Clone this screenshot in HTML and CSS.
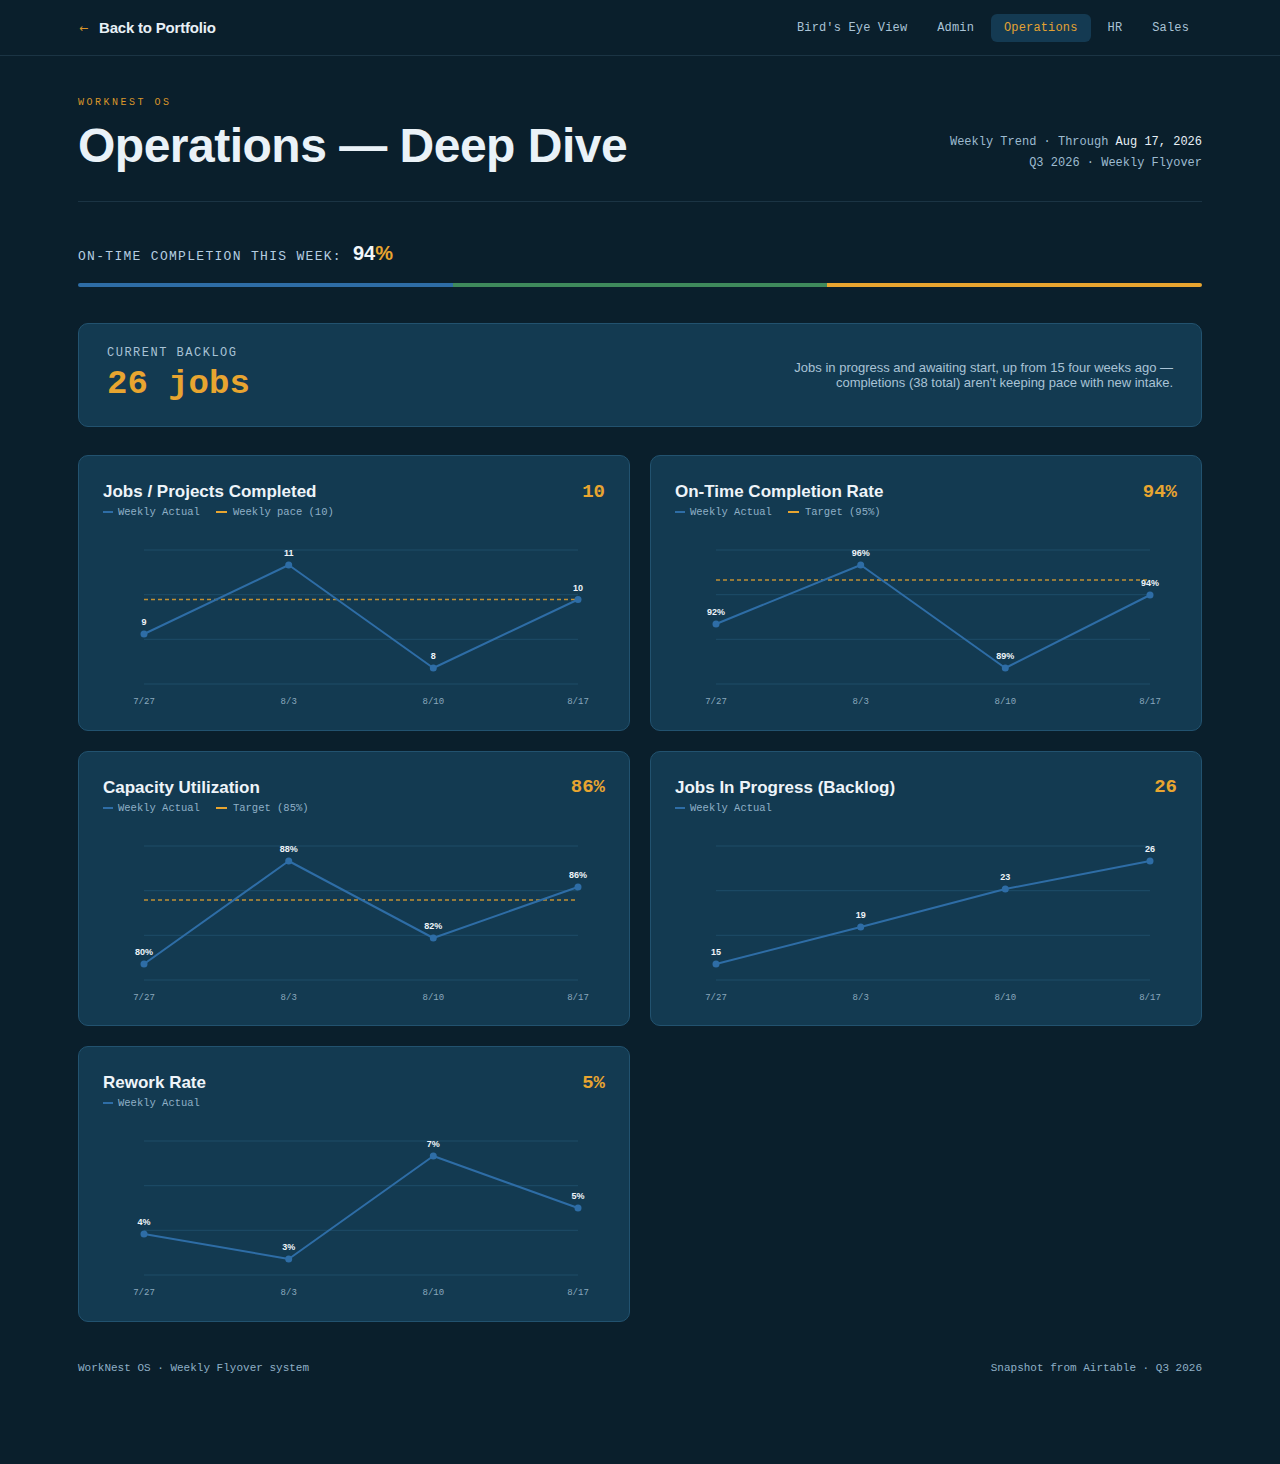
FILE: index.html
```html
<!DOCTYPE html>
<html lang="en">
<head>
<meta charset="utf-8">
<title>Operations — Deep Dive</title>
<link rel="stylesheet" href="styles.css">
</head>
<body>
<header class="topbar">
  <div class="wrap topbar-inner">
    <a class="back" href="#"><span class="back-arrow">←</span>Back to Portfolio</a>
    <nav class="nav">
      <a href="#" class="nav-item">Bird's Eye View</a>
      <a href="#" class="nav-item">Admin</a>
      <a href="#" class="nav-item active">Operations</a>
      <a href="#" class="nav-item">HR</a>
      <a href="#" class="nav-item">Sales</a>
    </nav>
  </div>
</header>

<main class="wrap">
  <section class="hero">
    <div class="hero-left">
      <div class="eyebrow">WORKNEST OS</div>
      <h1 class="title">Operations — Deep Dive</h1>
    </div>
    <div class="hero-meta">
      <div>Weekly Trend · Through <span class="bright">Aug 17, 2026</span></div>
      <div>Q3 2026 · Weekly Flyover</div>
    </div>
  </section>

  <section class="headline">
    <span class="headline-label">ON-TIME COMPLETION THIS WEEK:</span>
    <span class="headline-value">94<span class="pct">%</span></span>
  </section>
  <div class="tribar">
    <span class="seg seg-blue"></span><span class="seg seg-green"></span><span class="seg seg-orange"></span>
  </div>

  <section class="backlog">
    <div class="backlog-left">
      <div class="backlog-label">CURRENT BACKLOG</div>
      <div class="backlog-value">26 jobs</div>
    </div>
    <p class="backlog-desc">Jobs in progress and awaiting start, up from 15 four weeks ago —<br>completions (38 total) aren't keeping pace with new intake.</p>
  </section>

  <section class="charts">
    <!-- Chart 1 -->
    <article class="card">
      <div class="card-head">
        <h2 class="card-title">Jobs / Projects Completed</h2>
        <span class="card-value">10</span>
      </div>
      <div class="legend">
        <span class="lg"><i class="lg-dash blue"></i>Weekly Actual</span>
        <span class="lg"><i class="lg-dash orange"></i>Weekly pace (10)</span>
      </div>
      <svg class="chart" width="502" height="185" viewBox="0 0 502 185">
        <g class="grid"><line x1="41" x2="475" y1="30" y2="30"/><line x1="41" x2="475" y1="74.7" y2="74.7"/><line x1="41" x2="475" y1="119.3" y2="119.3"/><line x1="41" x2="475" y1="164" y2="164"/></g>
        <line class="target" x1="41" x2="475" y1="79.5" y2="79.5"/>
        <polyline class="series" points="41,114 185.7,45 330.3,148 475,79.5"/>
        <g class="pts"><circle cx="41" cy="114" r="3.5"/><circle cx="185.7" cy="45" r="3.5"/><circle cx="330.3" cy="148" r="3.5"/><circle cx="475" cy="79.5" r="3.5"/></g>
        <g class="dl"><text x="41" y="105">9</text><text x="185.7" y="36">11</text><text x="330.3" y="139">8</text><text x="475" y="71">10</text></g>
        <g class="ax"><text x="41" y="184">7/27</text><text x="185.7" y="184">8/3</text><text x="330.3" y="184">8/10</text><text x="475" y="184">8/17</text></g>
      </svg>
    </article>

    <!-- Chart 2 -->
    <article class="card">
      <div class="card-head">
        <h2 class="card-title">On-Time Completion Rate</h2>
        <span class="card-value">94%</span>
      </div>
      <div class="legend">
        <span class="lg"><i class="lg-dash blue"></i>Weekly Actual</span>
        <span class="lg"><i class="lg-dash orange"></i>Target (95%)</span>
      </div>
      <svg class="chart" width="502" height="185" viewBox="0 0 502 185">
        <g class="grid"><line x1="41" x2="475" y1="30" y2="30"/><line x1="41" x2="475" y1="74.7" y2="74.7"/><line x1="41" x2="475" y1="119.3" y2="119.3"/><line x1="41" x2="475" y1="164" y2="164"/></g>
        <line class="target" x1="41" x2="475" y1="60" y2="60"/>
        <polyline class="series" points="41,104 185.7,45 330.3,148 475,75"/>
        <g class="pts"><circle cx="41" cy="104" r="3.5"/><circle cx="185.7" cy="45" r="3.5"/><circle cx="330.3" cy="148" r="3.5"/><circle cx="475" cy="75" r="3.5"/></g>
        <g class="dl"><text x="41" y="95">92%</text><text x="185.7" y="36">96%</text><text x="330.3" y="139">89%</text><text x="475" y="66">94%</text></g>
        <g class="ax"><text x="41" y="184">7/27</text><text x="185.7" y="184">8/3</text><text x="330.3" y="184">8/10</text><text x="475" y="184">8/17</text></g>
      </svg>
    </article>

    <!-- Chart 3 -->
    <article class="card">
      <div class="card-head">
        <h2 class="card-title">Capacity Utilization</h2>
        <span class="card-value">86%</span>
      </div>
      <div class="legend">
        <span class="lg"><i class="lg-dash blue"></i>Weekly Actual</span>
        <span class="lg"><i class="lg-dash orange"></i>Target (85%)</span>
      </div>
      <svg class="chart" width="502" height="185" viewBox="0 0 502 185">
        <g class="grid"><line x1="41" x2="475" y1="30" y2="30"/><line x1="41" x2="475" y1="74.7" y2="74.7"/><line x1="41" x2="475" y1="119.3" y2="119.3"/><line x1="41" x2="475" y1="164" y2="164"/></g>
        <line class="target" x1="41" x2="475" y1="84" y2="84"/>
        <polyline class="series" points="41,148 185.7,45 330.3,122 475,71"/>
        <g class="pts"><circle cx="41" cy="148" r="3.5"/><circle cx="185.7" cy="45" r="3.5"/><circle cx="330.3" cy="122" r="3.5"/><circle cx="475" cy="71" r="3.5"/></g>
        <g class="dl"><text x="41" y="139">80%</text><text x="185.7" y="36">88%</text><text x="330.3" y="113">82%</text><text x="475" y="62">86%</text></g>
        <g class="ax"><text x="41" y="184">7/27</text><text x="185.7" y="184">8/3</text><text x="330.3" y="184">8/10</text><text x="475" y="184">8/17</text></g>
      </svg>
    </article>

    <!-- Chart 4 -->
    <article class="card">
      <div class="card-head">
        <h2 class="card-title">Jobs In Progress (Backlog)</h2>
        <span class="card-value">26</span>
      </div>
      <div class="legend">
        <span class="lg"><i class="lg-dash blue"></i>Weekly Actual</span>
      </div>
      <svg class="chart" width="502" height="185" viewBox="0 0 502 185">
        <g class="grid"><line x1="41" x2="475" y1="30" y2="30"/><line x1="41" x2="475" y1="74.7" y2="74.7"/><line x1="41" x2="475" y1="119.3" y2="119.3"/><line x1="41" x2="475" y1="164" y2="164"/></g>
        <polyline class="series" points="41,148 185.7,111 330.3,73 475,45"/>
        <g class="pts"><circle cx="41" cy="148" r="3.5"/><circle cx="185.7" cy="111" r="3.5"/><circle cx="330.3" cy="73" r="3.5"/><circle cx="475" cy="45" r="3.5"/></g>
        <g class="dl"><text x="41" y="139">15</text><text x="185.7" y="102">19</text><text x="330.3" y="64">23</text><text x="475" y="36">26</text></g>
        <g class="ax"><text x="41" y="184">7/27</text><text x="185.7" y="184">8/3</text><text x="330.3" y="184">8/10</text><text x="475" y="184">8/17</text></g>
      </svg>
    </article>

    <!-- Chart 5 -->
    <article class="card">
      <div class="card-head">
        <h2 class="card-title">Rework Rate</h2>
        <span class="card-value">5%</span>
      </div>
      <div class="legend">
        <span class="lg"><i class="lg-dash blue"></i>Weekly Actual</span>
      </div>
      <svg class="chart" width="502" height="185" viewBox="0 0 502 185">
        <g class="grid"><line x1="41" x2="475" y1="30" y2="30"/><line x1="41" x2="475" y1="74.7" y2="74.7"/><line x1="41" x2="475" y1="119.3" y2="119.3"/><line x1="41" x2="475" y1="164" y2="164"/></g>
        <polyline class="series" points="41,123 185.7,148 330.3,45 475,97"/>
        <g class="pts"><circle cx="41" cy="123" r="3.5"/><circle cx="185.7" cy="148" r="3.5"/><circle cx="330.3" cy="45" r="3.5"/><circle cx="475" cy="97" r="3.5"/></g>
        <g class="dl"><text x="41" y="114">4%</text><text x="185.7" y="139">3%</text><text x="330.3" y="36">7%</text><text x="475" y="88">5%</text></g>
        <g class="ax"><text x="41" y="184">7/27</text><text x="185.7" y="184">8/3</text><text x="330.3" y="184">8/10</text><text x="475" y="184">8/17</text></g>
      </svg>
    </article>
  </section>

  <footer class="footer">
    <span>WorkNest OS · Weekly Flyover system</span>
    <span>Snapshot from Airtable · Q3 2026</span>
  </footer>
</main>
</body>
</html>
```

FILE: styles.css
```css
* { box-sizing: border-box; }
html, body { margin: 0; padding: 0; }
body {
  background: #0a1f2c;
  color: #e8f0f6;
  font-family: "Liberation Sans", Arial, sans-serif;
  min-height: 1464px;
}
a { text-decoration: none; color: inherit; }

.wrap { width: 1124px; margin: 0 auto; }

/* Top bar */
.topbar { border-bottom: 1px solid #1b3444; }
.topbar-inner {
  height: 55px;
  display: flex;
  align-items: center;
  justify-content: space-between;
}
.back {
  display: flex;
  align-items: center;
  font-weight: 700;
  font-size: 15px;
  letter-spacing: -0.2px;
  color: #e8f0f6;
  padding-left: 1px;
}
.back-arrow {
  color: #d9962a;
  font-family: "DejaVu Sans", sans-serif;
  font-weight: 400;
  font-size: 11px;
  width: 20px;
  padding-top: 2px;
}
.nav { display: flex; gap: 4px; }
.nav-item {
  font-family: "Liberation Mono", "DejaVu Sans Mono", monospace;
  font-size: 12px;
  letter-spacing: 0.15px;
  color: #a9c3d6;
  padding: 7px 13px;
  border-radius: 6px;
  line-height: 14px;
  margin-top: 1px;
}
.nav-item.active { background: #143a52; color: #e3a232; }

/* Hero */
.hero {
  display: flex;
  justify-content: space-between;
  align-items: flex-end;
  padding-top: 40px;
  padding-bottom: 29px;
  border-bottom: 1px solid #1b3444;
}
.eyebrow {
  font-family: "Liberation Mono", "DejaVu Sans Mono", monospace;
  font-size: 10px;
  line-height: 14px;
  letter-spacing: 2.5px;
  color: #d9962a;
}
.title {
  margin: 9px 0 0;
  font-size: 48px;
  line-height: 53px;
  font-weight: 700;
  letter-spacing: -0.5px;
  color: #eaf2f8;
}
.hero-meta {
  font-family: "Liberation Mono", "DejaVu Sans Mono", monospace;
  font-size: 12px;
  line-height: 21px;
  color: #9dbbd0;
  text-align: right;
  margin-bottom: -2px;
}
.hero-meta .bright { color: #e8f0f6; }

/* Headline */
.headline {
  margin-top: 37px;
  display: flex;
  align-items: baseline;
  height: 28px;
  line-height: 28px;
}
.headline-label {
  font-family: "Liberation Mono", "DejaVu Sans Mono", monospace;
  font-size: 13px;
  letter-spacing: 1.3px;
  color: #b4cde0;
}
.headline-value {
  margin-left: 11px;
  font-size: 20px;
  font-weight: 700;
  color: #f2f6fa;
}
.headline-value .pct { color: #e8a530; }

.tribar {
  margin-top: 16px;
  display: flex;
  height: 4px;
  border-radius: 2px;
  overflow: hidden;
}
.seg { flex: 1; }
.seg-blue { background: #2e6da6; }
.seg-green { background: #3f8a5c; }
.seg-orange { background: #e8a530; }

/* Backlog */
.backlog {
  margin-top: 36px;
  background: #133a51;
  border: 1px solid #22526f;
  border-radius: 10px;
  padding: 22px 28px 22px 28px;
  display: flex;
  align-items: center;
  justify-content: space-between;
  height: 104px;
}
.backlog-label {
  font-family: "Liberation Mono", "DejaVu Sans Mono", monospace;
  font-size: 12px;
  line-height: 12px;
  letter-spacing: 1.5px;
  color: #a9c3d6;
}
.backlog-value {
  margin-top: 6px;
  font-family: "Liberation Mono", "DejaVu Sans Mono", monospace;
  font-size: 34px;
  line-height: 38px;
  font-weight: 700;
  color: #e8a530;
}
.backlog-desc {
  margin: 0;
  font-size: 13px;
  line-height: 15px;
  color: #a9c3d6;
  text-align: right;
}

/* Charts */
.charts {
  margin-top: 28px;
  display: grid;
  grid-template-columns: 1fr 1fr;
  gap: 20px;
}
.card {
  background: #133a51;
  border: 1px solid #22526f;
  border-radius: 10px;
  padding: 25px 24px 24px 24px;
  height: 275.5px;
}
.card-head {
  display: flex;
  justify-content: space-between;
  align-items: center;
  height: 22px;
}
.card-title {
  margin: 0;
  font-size: 17px;
  line-height: 22px;
  font-weight: 700;
  color: #eef4f9;
}
.card-value {
  font-size: 19px;
  line-height: 20px;
  font-weight: 700;
  color: #e8a530;
  font-family: "Liberation Mono", "DejaVu Sans Mono", monospace;
  margin-top: -1px;
}
.legend {
  margin-top: 2px;
  height: 14px;
  display: flex;
  gap: 16px;
  align-items: center;
}
.lg {
  display: flex;
  align-items: center;
  font-family: "Liberation Mono", "DejaVu Sans Mono", monospace;
  font-size: 10.5px;
  color: #8fb0c7;
}
.lg-dash {
  display: inline-block;
  width: 10px;
  height: 2px;
  margin-right: 5px;
}
.lg + .lg .lg-dash { width: 11px; margin-right: 6px; }
.lg-dash.blue { background: #2e6da6; }
.lg-dash.orange { background: #e8a530; }

.chart { display: block; margin-top: 1px; overflow: visible; }
.grid line { stroke: #22526f; stroke-width: 1; opacity: 0.8; }
.target { stroke: #e0a030; stroke-width: 1.3; stroke-dasharray: 4 3; opacity: 0.85; }
.series { fill: none; stroke: #2e6da6; stroke-width: 2; stroke-linejoin: round; }
.pts circle { fill: #2e6da6; }
.dl text {
  font-family: "Liberation Sans", Arial, sans-serif;
  font-size: 9px;
  font-weight: 700;
  fill: #eef4f9;
  text-anchor: middle;
}
.ax text {
  font-family: "Liberation Mono", "DejaVu Sans Mono", monospace;
  font-size: 9px;
  fill: #8aa8bd;
  text-anchor: middle;
}

/* Footer */
.footer {
  margin-top: 40px;
  display: flex;
  justify-content: space-between;
  font-family: "Liberation Mono", "DejaVu Sans Mono", monospace;
  font-size: 11px;
  line-height: 13px;
  color: #8fb0c7;
  padding-bottom: 80px;
}
```
